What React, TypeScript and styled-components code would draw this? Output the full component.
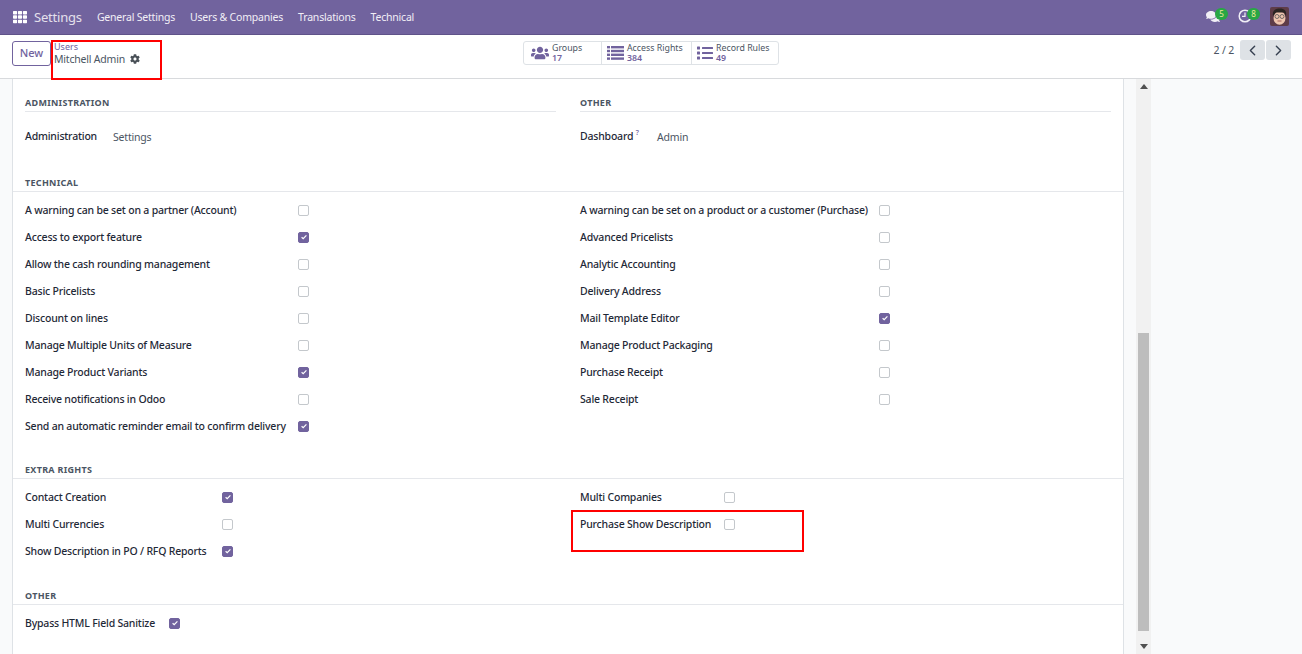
import styled, { createGlobalStyle } from "styled-components";
import { FaCog, FaComments, FaList, FaTh, FaUsers } from "react-icons/fa";
import { FiChevronLeft, FiChevronRight } from "react-icons/fi";

const technicalLeft: [string, boolean][] = [
  ["A warning can be set on a partner (Account)", false],
  ["Access to export feature", true],
  ["Allow the cash rounding management", false],
  ["Basic Pricelists", false],
  ["Discount on lines", false],
  ["Manage Multiple Units of Measure", false],
  ["Manage Product Variants", true],
  ["Receive notifications in Odoo", false],
  ["Send an automatic reminder email to confirm delivery", true],
];

const technicalRight: [string, boolean][] = [
  ["A warning can be set on a product or a customer (Purchase)", false],
  ["Advanced Pricelists", false],
  ["Analytic Accounting", false],
  ["Delivery Address", false],
  ["Mail Template Editor", true],
  ["Manage Product Packaging", false],
  ["Purchase Receipt", false],
  ["Sale Receipt", false],
];

const extraLeft: [string, boolean][] = [
  ["Contact Creation", true],
  ["Multi Currencies", false],
  ["Show Description in PO / RFQ Reports", true],
];

const extraRight: [string, boolean][] = [
  ["Multi Companies", false],
  ["Purchase Show Description", false],
];

const CheckRows = ({ rows, labelWidth }: { rows: [string, boolean][]; labelWidth: number }) => (
  <div>
    {rows.map(([label, checked]) => (
      <Row key={label}>
        <RowLabel $width={labelWidth}>{label}</RowLabel>
        <Check $checked={checked}>
          {checked && (
            <svg width="8" height="8" viewBox="0 0 8 8">
              <path d="M1.6 4.2 3.2 5.7 6.4 2.4" fill="none" stroke="#fff" strokeWidth="1.2" />
            </svg>
          )}
        </Check>
      </Row>
    ))}
  </div>
);

const App = () => {
  return (
    <Page>
      <GlobalStyle />
      <NavBar>
        <NavLeft>
          <AppsIcon />
          <Brand>Settings</Brand>
          <NavLink>General Settings</NavLink>
          <NavLink>Users &amp; Companies</NavLink>
          <NavLink>Translations</NavLink>
          <NavLink>Technical</NavLink>
        </NavLeft>
        <NavRight>
          <Systray>
            <FaComments size={15} />
            <Badge>5</Badge>
          </Systray>
          <Systray>
            <svg width="14" height="14" viewBox="0 0 14 14">
              <circle cx="7" cy="7" r="5.8" fill="none" stroke="#f1eff6" strokeWidth="1.5" />
              <path d="M7 3.6V7.4H4" fill="none" stroke="#f1eff6" strokeWidth="1.2" />
            </svg>
            <Badge>8</Badge>
          </Systray>
          <Avatar viewBox="0 0 19 19">
            <rect width="19" height="19" rx="2" fill="#5e3c48" />
            <ellipse cx="9.5" cy="11" rx="6" ry="6.8" fill="#eec5ae" />
            <path d="M3 9C2 3 6 1.5 10 1.5s7 2 6 7.5l-2-3.5H6Z" fill="#2b2523" />
            <circle cx="7" cy="9.5" r="2" fill="none" stroke="#555" strokeWidth=".8" />
            <circle cx="12" cy="9.5" r="2" fill="none" stroke="#555" strokeWidth=".8" />
            <path d="M7.5 14h4" stroke="#a8645a" strokeWidth="1" />
          </Avatar>
        </NavRight>
      </NavBar>

      <ControlPanel>
        <PanelLeft>
          <NewButton>New</NewButton>
          <Breadcrumb>
            <Crumb>Users</Crumb>
            <Current>
              Mitchell Admin
              <FaCog size={10} color="#495057" />
            </Current>
          </Breadcrumb>
          <RedBox $left={39} $top={-1} $width={111} $height={40} />
        </PanelLeft>
        <StatButtons>
          <StatButton $width={78} $pad={8}>
            <FaUsers size={18} />
            <StatText>
              <span>Groups</span>
              <b>17</b>
            </StatText>
          </StatButton>
          <StatButton $width={90} $pad={5}>
            <svg width="17" height="14" viewBox="0 0 17 14" fill="currentColor">
              <rect y="0" width="3" height="2.4" />
              <rect x="4" y="0" width="13" height="2.4" />
              <rect y="3.8" width="3" height="2.4" />
              <rect x="4" y="3.8" width="13" height="2.4" />
              <rect y="7.6" width="3" height="2.4" />
              <rect x="4" y="7.6" width="13" height="2.4" />
              <rect y="11.4" width="3" height="2.4" />
              <rect x="4" y="11.4" width="13" height="2.4" />
            </svg>
            <StatText>
              <span>Access Rights</span>
              <b>384</b>
            </StatText>
          </StatButton>
          <StatButton $width={88} $pad={5}>
            <FaList size={16} />
            <StatText>
              <span>Record Rules</span>
              <b>49</b>
            </StatText>
          </StatButton>
        </StatButtons>
        <Pager>
          <span>2 / 2</span>
          <PagerButtons>
            <PagerButton>
              <FiChevronLeft size={17} />
            </PagerButton>
            <PagerButton>
              <FiChevronRight size={17} />
            </PagerButton>
          </PagerButtons>
        </Pager>
      </ControlPanel>

      <Body>
        <Sheet>
          <TwoTitles>
            <HalfTitle>ADMINISTRATION</HalfTitle>
            <HalfTitle>OTHER</HalfTitle>
          </TwoTitles>
          <Columns>
            <ValueRow>
              <ValueLabel $width={88}>Administration</ValueLabel>
              <Value>Settings</Value>
            </ValueRow>
            <ValueRow>
              <ValueLabel $width={77}>
                Dashboard <Help>?</Help>
              </ValueLabel>
              <Value>Admin</Value>
            </ValueRow>
          </Columns>

          <Section $top={28}>
            <SectionTitle>TECHNICAL</SectionTitle>
            <Columns>
              <CheckRows rows={technicalLeft} labelWidth={273} />
              <CheckRows rows={technicalRight} labelWidth={299} />
            </Columns>
          </Section>

          <Section $top={25}>
            <SectionTitle>EXTRA RIGHTS</SectionTitle>
            <Columns>
              <CheckRows rows={extraLeft} labelWidth={197} />
              <CheckRows rows={extraRight} labelWidth={144} />
            </Columns>
            <RedBox $left={558} $top={46} $width={233} $height={42} />
          </Section>

          <Section $top={26}>
            <SectionTitle>OTHER</SectionTitle>
            <Columns>
              <CheckRows rows={[["Bypass HTML Field Sanitize", true]]} labelWidth={144} />
            </Columns>
          </Section>
        </Sheet>
        <Scrollbar>
          <ScrollArrow>
            <svg width="8" height="5" viewBox="0 0 8 5">
              <path d="M4 0 8 5H0Z" fill="#505050" />
            </svg>
          </ScrollArrow>
          <ScrollTrack>
            <ScrollThumb />
          </ScrollTrack>
          <ScrollArrow>
            <svg width="8" height="5" viewBox="0 0 8 5">
              <path d="M0 0H8L4 5Z" fill="#505050" />
            </svg>
          </ScrollArrow>
        </Scrollbar>
      </Body>
    </Page>
  );
};

export default App;

const AppsIcon = styled(FaTh)`
  width: 14px;
  height: 14px;
  margin-right: 7px;
`;

const GlobalStyle = createGlobalStyle`
  html, body {
    margin: 0;
    padding: 0;
    height: 100%;
    overflow: hidden;
  }
  body {
    font-family: "Noto Sans", "Open Sans", sans-serif;
    font-size: 10.5px;
    letter-spacing: -0.2px;
    color: #374151;
    background: #f9fafb;
  }
`;

const Page = styled.div`
  display: flex;
  flex-direction: column;
  height: 654px;
  overflow: hidden;
`;

const NavBar = styled.header`
  height: 34px;
  padding: 0 13px;
  background: #71639e;
  border-bottom: 1px solid #5f5389;
  color: #fff;
  display: flex;
  align-items: center;
  justify-content: space-between;
  flex-shrink: 0;
`;

const NavLeft = styled.nav`
  display: flex;
  align-items: center;
  margin-top: -1px;
`;

const Brand = styled.span`
  font-size: 13px;
  margin-right: 15px;
  color: #e4e0ec;
`;

const NavLink = styled.span`
  margin-right: 15px;
  color: #f1eff6;
`;

const NavRight = styled.div`
  display: flex;
  align-items: center;
  gap: 16px;
`;

const Systray = styled.div`
  position: relative;
  width: 14px;
  height: 16px;
  display: flex;
  align-items: center;
  margin-right: 2px;
  margin-top: -2px;
  color: #f1eff6;
`;

const Badge = styled.span`
  position: absolute;
  left: 9px;
  top: 0;
  min-width: 13px;
  height: 12px;
  padding: 0 1px;
  border-radius: 6px;
  box-sizing: border-box;
  background: #28a745;
  color: #f3ea9c;
  font-size: 8px;
  line-height: 11px;
  letter-spacing: 0;
  text-align: center;
`;

const Avatar = styled.svg`
  width: 19px;
  height: 19px;
  margin-top: -1px;
`;

const ControlPanel = styled.div`
  height: 44px;
  box-sizing: border-box;
  padding: 6px 12px 0;
  background: #fff;
  border-bottom: 1px solid #d8dadd;
  display: grid;
  grid-template-columns: 1fr auto 1fr;
  align-items: start;
  flex-shrink: 0;
`;

const PanelLeft = styled.div`
  position: relative;
  display: flex;
  align-items: flex-start;
`;

const NewButton = styled.button`
  width: 39px;
  height: 25px;
  box-sizing: border-box;
  padding: 0 0 3px;
  background: #fff;
  border: 1px solid #71639e;
  border-radius: 3px;
  color: #71639e;
  font: 500 11px "Noto Sans", sans-serif;
`;

const Breadcrumb = styled.div`
  margin-left: 3px;
  display: flex;
  flex-direction: column;
`;

const Crumb = styled.span`
  font-size: 9px;
  line-height: 11px;
  letter-spacing: 0;
  color: #71639e;
`;

const Current = styled.span`
  display: flex;
  align-items: center;
  gap: 5px;
  font-size: 10.5px;
  line-height: 14px;
  color: #4b5563;
`;

const RedBox = styled.div<{ $left: number; $top: number; $width: number; $height: number }>`
  position: absolute;
  left: ${(p) => p.$left}px;
  top: ${(p) => p.$top}px;
  width: ${(p) => p.$width}px;
  height: ${(p) => p.$height}px;
  box-sizing: border-box;
  border: 2px solid #f00;
  pointer-events: none;
`;

const StatButtons = styled.div`
  display: flex;
  border: 1px solid #dee2e6;
  border-radius: 3px;
  height: 24px;
  box-sizing: border-box;
`;

const StatButton = styled.div<{ $width: number; $pad: number }>`
  width: ${(p) => p.$width}px;
  box-sizing: border-box;
  padding-left: ${(p) => p.$pad}px;
  display: flex;
  align-items: center;
  gap: 3px;
  color: #71639e;
  & + & {
    border-left: 1px solid #dee2e6;
  }
  &:first-child {
    margin-left: -1px;
  }
  &:last-child {
    margin-right: -1px;
  }
`;

const StatText = styled.div`
  display: flex;
  flex-direction: column;
  font-size: 8.8px;
  line-height: 10px;
  letter-spacing: 0;
  color: #4b5563;
  white-space: nowrap;
  & b {
    font-weight: 600;
    color: #71639e;
  }
`;

const Pager = styled.div`
  display: flex;
  align-items: center;
  justify-content: flex-end;
  gap: 6px;
  margin-top: -1px;
  margin-right: -1px;
  color: #4b5563;
`;

const PagerButtons = styled.div`
  display: flex;
  gap: 1px;
`;

const PagerButton = styled.div`
  width: 25px;
  height: 20px;
  background: #dee2e6;
  border-radius: 3px;
  color: #374151;
  display: flex;
  align-items: center;
  justify-content: center;
`;

const Body = styled.div`
  flex: 1;
  min-height: 0;
  display: flex;
  align-items: stretch;
`;

const Sheet = styled.main`
  width: 1112px;
  margin-left: 12px;
  box-sizing: border-box;
  padding-top: 18px;
  background: #fff;
  border-left: 1px solid #dee2e6;
  border-right: 1px solid #dee2e6;
  flex-shrink: 0;
`;

const TwoTitles = styled.div`
  display: grid;
  grid-template-columns: 531px 531px;
  column-gap: 24px;
  padding-left: 12px;
`;

const HalfTitle = styled.div`
  font-size: 9px;
  font-weight: 700;
  line-height: 12px;
  padding-bottom: 2px;
  letter-spacing: 0.3px;
  color: #4b5563;
  border-bottom: 1px solid #e5e7eb;
`;

const Columns = styled.div`
  display: grid;
  grid-template-columns: 555px 1fr;
  padding-left: 12px;
`;

const ValueRow = styled.div`
  display: flex;
  align-items: center;
  height: 27px;
  margin-top: 10px;
`;

const ValueLabel = styled.span<{ $width: number }>`
  width: ${(p) => p.$width}px;
  font-weight: 500;
  color: #1f2937;
  white-space: nowrap;
`;

const Help = styled.sup`
  font-size: 7px;
  color: #71639e;
`;

const Value = styled.span`
  color: #4b5563;
  margin-top: 2px;
`;

const Section = styled.section<{ $top: number }>`
  position: relative;
  margin-top: ${(p) => p.$top}px;
`;

const SectionTitle = styled.div`
  font-size: 9px;
  font-weight: 700;
  line-height: 12px;
  letter-spacing: 0.3px;
  padding: 0 0 2px 12px;
  margin-bottom: 4px;
  color: #4b5563;
  border-bottom: 1px solid #e5e7eb;
`;

const Row = styled.div`
  height: 27px;
  display: flex;
  align-items: center;
`;

const RowLabel = styled.span<{ $width: number }>`
  width: ${(p) => p.$width}px;
  flex-shrink: 0;
  font-weight: 500;
  color: #1f2937;
  white-space: nowrap;
`;

const Check = styled.span<{ $checked: boolean }>`
  width: 11px;
  height: 11px;
  box-sizing: border-box;
  margin-top: 1px;
  border-radius: 2px;
  border: 1px solid ${(p) => (p.$checked ? "#71639e" : "#c4c8cc")};
  background: ${(p) => (p.$checked ? "#71639e" : "#fff")};
  display: flex;
  align-items: center;
  justify-content: center;
`;

const Scrollbar = styled.div`
  width: 15px;
  margin-left: 12px;
  background: #f1f1f1;
  display: flex;
  flex-direction: column;
  flex-shrink: 0;
`;

const ScrollArrow = styled.div`
  height: 15px;
  display: flex;
  align-items: center;
  justify-content: center;
  flex-shrink: 0;
`;

const ScrollTrack = styled.div`
  flex: 1;
  display: flex;
  flex-direction: column;
  justify-content: flex-end;
  padding: 0 2px 8px;
`;

const ScrollThumb = styled.div`
  height: 298px;
  background: #bdbdbd;
`;
